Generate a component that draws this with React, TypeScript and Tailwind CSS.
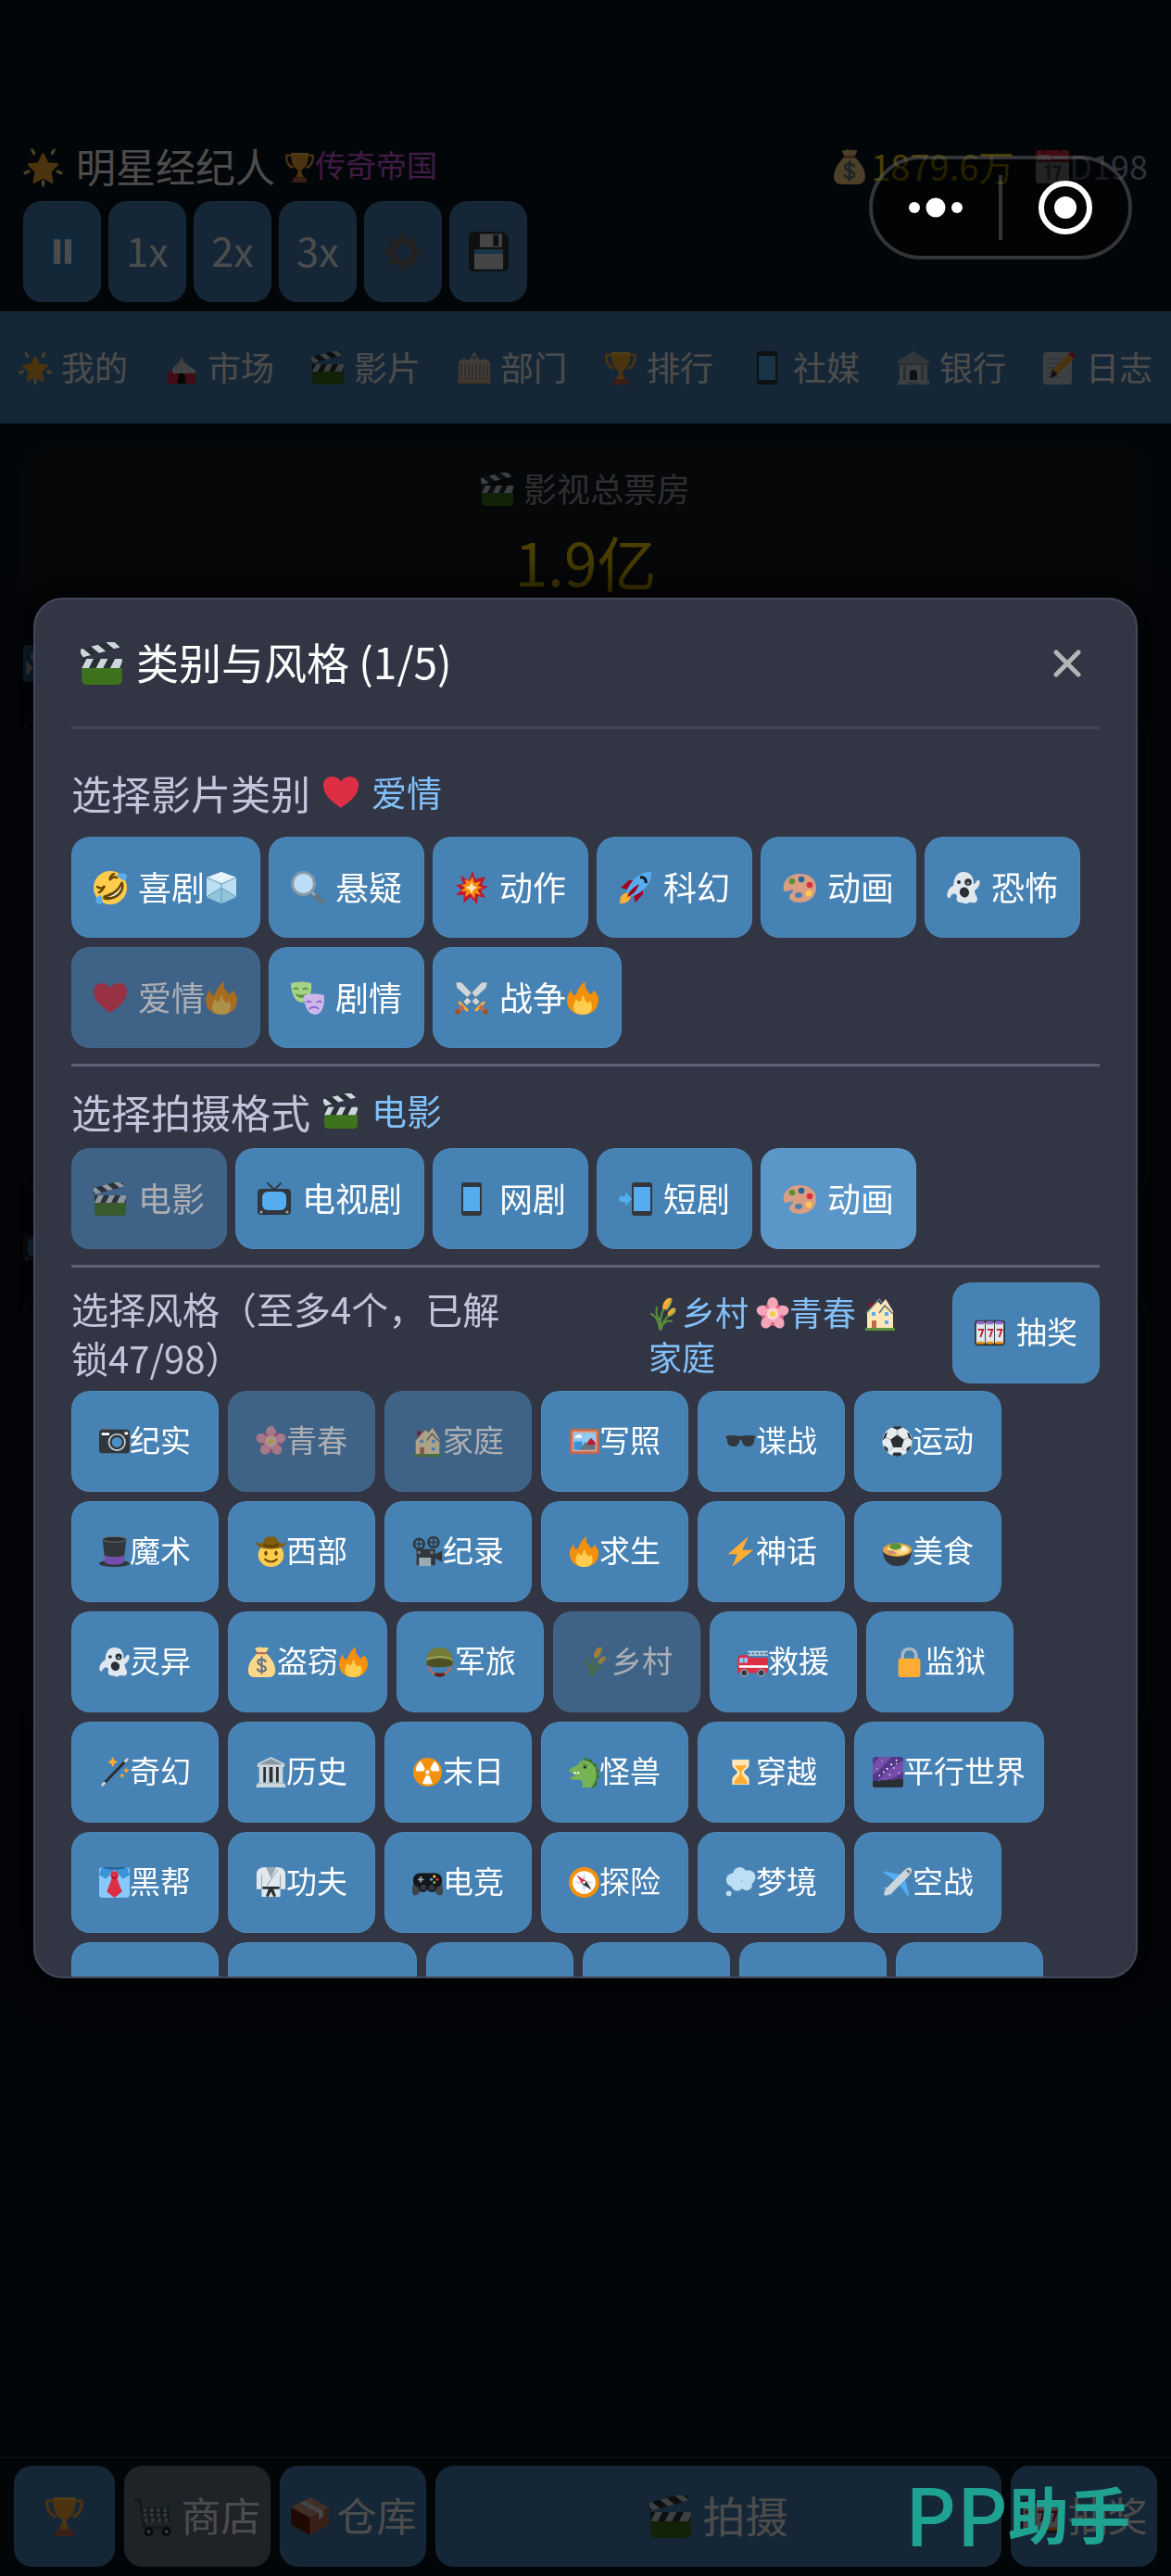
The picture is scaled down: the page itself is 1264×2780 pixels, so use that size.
import React, { useState } from 'react';
import clsx from 'clsx';

// Colour icons, all on a 36x36 grid so they can sit next to text at 1em
const ICONS: Record<string, React.ReactNode> = {
  star: (
    <>
      <path fill="#ffac33" d="M18 6l4 8.500 9 1-6.500 6.500 1.700 9.500L18 27l-8.200 4.500L11.500 22 5 15.500l9-1z" stroke="#ffac33" strokeWidth="2" strokeLinejoin="round" />
      <g fill="#ffd983">
        <ellipse cx="9" cy="4" rx="1.500" ry="3.300" transform="rotate(-28 9 4)" />
        <ellipse cx="27" cy="4" rx="1.500" ry="3.300" transform="rotate(28 27 4)" />
        <ellipse cx="3.300" cy="22.500" rx="3.300" ry="1.500" transform="rotate(-20 3.300 22.500)" />
        <ellipse cx="32.700" cy="22.500" rx="3.300" ry="1.500" transform="rotate(20 32.700 22.500)" />
        <ellipse cx="18" cy="32.500" rx="1.500" ry="3.400" />
      </g>
    </>
  ),
  trophy: (
    <>
      <path fill="none" stroke="#ffac33" strokeWidth="2.600" d="M9 4H2.500c-1 6 2 13 8 14.500M27 4h6.500c1 6-2 13-8 14.500" />
      <path fill="#ffac33" d="M8 1h20c.6 10-1.500 16-7.500 20-1.500 2 .5 6 2.500 9H13c2-3 4-7 2.500-9C9.500 17 7.400 11 8 1z" />
      <path fill="#ffcc4d" d="M8 1h20v2.500H8z" />
      <path fill="#c1694f" d="M11 30h14l2 6H9z" />
    </>
  ),
  money: (
    <>
      <path fill="#fdd888" d="M12 8.500C7 14 2 20 2 28c0 6 4 8 8 8h16c4 0 8-2 8-8 0-8-5-14-10-19.500z" />
      <path fill="#fdd888" d="M10 2c2-2 3 0 4-1s3-1 4 0 3-1 4 0 3-1 4 1l-3 5H13z" />
      <path fill="#bf6952" d="M12 6.500h12v2.500H12z" />
      <path fill="none" stroke="#67757f" strokeWidth="2.400" strokeLinecap="round" d="M22.500 17.500c-1-3-9-3.500-9 .7 0 4.800 9.300 3 9.300 7.800 0 4.400-8.600 4-9.800.7M18 12.500v19" />
    </>
  ),
  calendar: (
    <>
      <path fill="#e1e8ed" d="M0 12h36v20a4 4 0 0 1-4 4H4a4 4 0 0 1-4-4z" />
      <path fill="#dd2e44" d="M0 4a4 4 0 0 1 4-4h28a4 4 0 0 1 4 4v9H0z" />
      <g fill="#8b1a2b"><circle cx="10" cy="1" r="2" /><circle cx="26" cy="1" r="2" /></g>
      <path fill="none" stroke="#fff" strokeWidth="1.400" d="M4 5v5H2M7 5v5h3V5M13 5v5h3M20 8h13" />
      <path fill="none" stroke="#66757f" strokeWidth="3" d="M10 19l4-2v15M18 18h8l-4 14" />
    </>
  ),
  pause: (
    <>
      <rect width="36" height="36" rx="4" fill="#3b88c3" />
      <path fill="#fff" d="M10 7h6v22h-6zM20 7h6v22h-6z" />
    </>
  ),
  gear: (
    <>
      <circle cx="18" cy="18" r="9.500" fill="none" stroke="#746e6c" strokeWidth="5" />
      <path stroke="#746e6c" strokeWidth="5" d="M18 1v7M18 28v7M1 18h7M28 18h7M6 6l5 5M25 25l5 5M6 30l5-5M25 11l5-5" />
    </>
  ),
  floppy: (
    <>
      <path fill="#31373d" d="M4 0h27l5 5v27a4 4 0 0 1-4 4H4a4 4 0 0 1-4-4V4a4 4 0 0 1 4-4z" />
      <path fill="#e1e8ed" d="M10 2h20v12H10zM5 19h26v15H5z" />
      <path fill="#31373d" d="M22 3h5v10h-5z" />
      <path fill="#55acee" d="M5 16h26v4H5z" />
    </>
  ),
  tent: (
    <>
      <path fill="#3b88c3" d="M18 0l7 2-7 2z" />
      <path stroke="#66757f" d="M18 0v8" />
      <path fill="#dd2e44" d="M3 22h30v13H3z" />
      <path fill="#e1e8ed" d="M18 6c2 7 9 10 15 15 0 4-5 4-5 1 0 3-5 3-5 0 0 3-5 3-5 0 0 3-5 3-5 0 0 3-5 3-5-1C9 16 16 13 18 6z" />
      <path fill="none" stroke="#99aab5" d="M17 9l-6 12M19 9l6 12M18 8v14" />
      <path fill="#14171a" d="M15 24h6l2 11H13z" />
    </>
  ),
  clapper: (
    <>
      <path fill="#3e721d" d="M1 20h34v12a4 4 0 0 1-4 4H5a4 4 0 0 1-4-4z" />
      <path fill="#292f33" d="M1 14h34v8H1z" />
      <path fill="#ccd6dd" d="M5 14h6l-4 8H1zM17 14h6l-4 8h-6zM29 14h6v3l-2 5h-8z" />
      <g transform="rotate(-15 1 13)">
        <path fill="#292f33" d="M0 6h34v7H0z" />
        <path fill="#ccd6dd" d="M0 6h4l5 7H2zM11 6h6l5 7h-6zM24 6h6l4 6v1h-5z" />
      </g>
    </>
  ),
  office: (
    <>
      <path fill="#e6cdb0" d="M1 12l5-4 6 2 3-4 3-6 3 6 3 4 6-2 5 4v22H1z" />
      <path fill="#c9d3da" d="M15 7l3-6 3 6v5h-6z" />
      <path stroke="#6f8593" strokeWidth="1.200" d="M4 13v17M8 13v17M12 13v17M16 13v17M20 13v17M24 13v17M28 13v17M32 13v17" />
      <path fill="#d1a47d" d="M0 30h36v1.500H0zM0 33h36v2H0z" />
      <circle cx="18" cy="7" r="1.800" fill="#66757f" />
    </>
  ),
  phone: (
    <>
      <rect x="7" width="22" height="36" rx="3" fill="#31373d" />
      <path fill="#55acee" d="M9 5h18v26H9z" />
    </>
  ),
  phoneIn: (
    <>
      <rect x="14" width="22" height="36" rx="3" fill="#31373d" />
      <path fill="#55acee" d="M16 5h18v26H16zM14 18l-7 8v-5H1l-1-3 1-3h6v-5z" />
    </>
  ),
  bank: (
    <>
      <path fill="#aab8c2" d="M18 0l17 11v3H1V11z" />
      <path fill="#ccd6dd" d="M3 14h30v18H3zM1 32h34v4H1z" />
      <path fill="#8899a6" d="M7 16h3v15H7zM26 16h3v15h-3zM1 13h34v2H1z" />
      <path fill="#31373d" d="M14 31v-7a4 4 0 0 1 8 0v7z" />
      <path fill="#aab8c2" d="M12 33h12v3H12z" />
    </>
  ),
  memo: (
    <>
      <rect y="1" width="31" height="35" rx="4" fill="#ccd6dd" />
      <path stroke="#99aab5" strokeWidth="1.600" d="M4 8h16M4 13h14M4 18h10M4 23h7M4 28h16" />
      <path fill="#ffac33" d="M27 3l6 5-17 17-6-5z" />
      <path fill="#dd2e44" d="M27 3c3-4 10 1 6 5z" />
      <path fill="#292f33" d="M10 20l6 5-8 4z" />
    </>
  ),
  cinema: (
    <>
      <rect width="36" height="36" rx="4" fill="#3b88c3" />
      <circle cx="12" cy="11" r="5" fill="#fff" />
      <circle cx="23" cy="11" r="4" fill="#fff" />
      <path fill="#fff" d="M10 17h17v12H10zM3 15l7 7-7 8z" />
    </>
  ),
  tv: (
    <>
      <path stroke="#31373d" strokeWidth="1.800" strokeLinecap="round" d="M11 1l7 7 7-7" />
      <rect y="7" width="36" height="28" rx="4" fill="#31373d" />
      <rect x="5" y="10" width="26" height="20" rx="6" fill="#55acee" />
      <g fill="#99aab5"><circle cx="4" cy="32" r="1.500" /><circle cx="32" cy="32" r="1.500" /></g>
    </>
  ),
  rofl: (
    <>
      <circle cx="18" cy="18" r="18" fill="#ffcc4d" />
      <path fill="#664500" d="M32 13c3 10-8 20-20 18-3-1-2-4 0-5 9-3 13-5 17-13 1-2 3-2 3 0z" />
      <path fill="#fff" d="M30 16c-3 6-8 10-15 12 8 1 15-6 15-12z" />
      <path fill="none" stroke="#664500" strokeWidth="2.500" strokeLinecap="round" d="M4 17c3 2 6 2 8-1-2 4-3 6-6 7M22 3c-4 2-5 4-4 7 0-3 4-4 7-3" />
      <path fill="#5dadec" d="M25 4c5-3 11-2 11 2 0 5-5 6-11-2zM8 26c-6 2-7 6-4 9 4 2 8 0 4-9z" />
    </>
  ),
  ice: (
    <>
      <path fill="#bddff4" d="M18 1l16 6v21l-16 7L2 28V7z" />
      <path fill="#e1f1fa" d="M18 1l16 6-16 7L2 7z" />
      <path fill="#90c5dc" d="M2 28l16-10 16 10-16 7z" />
      <path fill="none" stroke="#5f9db5" d="M2 28l16-10 16 10M18 14v21M2 7l16 7 16-7" />
      <path fill="none" stroke="#fff" d="M9 6l9-3M14 9l10-4" />
    </>
  ),
  search: (
    <>
      <path stroke="#66757f" strokeWidth="5" strokeLinecap="round" d="M26 26l7 7" />
      <path stroke="#99aab5" strokeWidth="3" d="M21 21l5 5" />
      <circle cx="13.500" cy="13.500" r="12" fill="#bbddf5" stroke="#8899a6" strokeWidth="3" />
    </>
  ),
  boom: (
    <>
      <path fill="#be1931" d="M19 0l3 9 11-3-4 9 7 2-8 4 5 8-8-2-1 9-7-8-8 7 1-9-9 0 6-6-6-5 8-1-3-9 9 5z" />
      <path fill="#f4900c" d="M19 6l2 7 7-2-3 5 5 2-6 2 4 6-6-2-1 6-4-6-6 4 1-6-6 0 5-4-4-3 5-1-1-5 5 2z" />
      <path fill="#ffe8b6" d="M18 12l2 4 4 2-4 2-2 5-2-5-5-2 5-2z" />
    </>
  ),
  rocket: (
    <>
      <path fill="#a0041e" d="M2 18l9-8h6l-8 10zM18 34l8-9v-6l-10 8z" />
      <path fill="#ffac33" d="M1 35c0-6 1-9 5-11s8 2 6 6-5 5-11 5z" />
      <path fill="#55acee" d="M35 1C24 0 14 8 8 22l6 6C28 22 36 12 35 1z" />
      <path fill="#a0041e" d="M22 14c-7 4-11 8-13 14 6-2 10-6 13-14z" />
      <path fill="none" stroke="#14171a" strokeWidth="3" d="M23 7c4-1 7 2 6 6" />
    </>
  ),
  palette: (
    <>
      <path fill="#d99e82" d="M18 3c11 0 18 6 18 15s-7 16-18 16c-6 0-11-3-11-6 0-4 4-4 4-7s-7 3-10 0C-1 13 5 3 18 3z" />
      <ellipse cx="17" cy="26" rx="4" ry="3" fill="#4682b4" />
      <circle cx="10" cy="11" r="3.300" fill="#5c913b" />
      <circle cx="20" cy="9" r="3.300" fill="#226699" />
      <circle cx="29" cy="15" r="3.300" fill="#dd2e44" />
      <circle cx="28" cy="24" r="3.300" fill="#ffcc4d" />
    </>
  ),
  ghost: (
    <>
      <path fill="#e1e8ed" d="M18 1c8 0 11 6 11 13 2 1 3-6 6-4 2 3-1 9-5 11 0 5 5 8 2 12-2 3-6 0-8 1-4 3-6 0-9 0-4 0-5-2-4-7-1-3-3-3-5-2s-2 5-4 4c-4-2 0-12 5-13C8 8 10 1 18 1z" />
      <circle cx="13" cy="12" r="2" fill="#292f33" />
      <circle cx="23" cy="12" r="3.800" fill="#292f33" />
      <circle cx="23" cy="13" r="1.600" fill="#8899a6" />
      <ellipse cx="19" cy="23" rx="5" ry="5.500" fill="#292f33" transform="rotate(-30 19 23)" />
    </>
  ),
  heart: <path fill="#dd2e44" d="M18 34C11 29 0 22 0 11 0 5 4 2 9 2c4 0 7 2 9 5 2-3 5-5 9-5 5 0 9 3 9 9 0 11-11 18-18 23z" />,
  fire: (
    <>
      <path fill="#f4900c" d="M35 19c0 11-7 17-17 17S1 30 1 20C1 16 3 12 6 9c0 4 1 6 3 6 4 0 1-7 12-15-1 6 0 8 3 11 1 2 2 4 4 2 1-1 1-2 3-3 1 3 4 5 4 9z" />
      <path fill="#ffcc4d" d="M28 28c0 5-4 8-10 8S8 33 8 28c0-4 2-6 3-9 2 3 3 4 5 2 1-1 0-4 3-6 0 5 2 6 4 8 1 1 3-1 3-2 1 2 2 4 2 7z" />
    </>
  ),
  masks: (
    <>
      <path fill="#a6d388" d="M0 2c7-2 14-2 22 0 1 12-3 21-10 21S0 14 0 2z" />
      <path fill="none" stroke="#5c913b" strokeWidth="1.800" d="M3 9c1-2 4-2 5 0M13 9c1-2 4-2 5 0" />
      <path fill="#5c913b" d="M5 13c4 2 8 2 12 0-1 6-10 7-12 0z" />
      <path fill="#cbb7ea" d="M14 15c7-2 14-2 22 0 1 12-3 21-10 21s-12-9-12-21z" />
      <path fill="none" stroke="#9266cc" strokeWidth="1.800" d="M17 23c1-2 4-2 5 0M28 23c1-2 4-2 5 0M20 30c2-3 8-3 10 0" />
    </>
  ),
  swords: (
    <>
      <path fill="#ccd6dd" stroke="#66757f" strokeWidth=".600" d="M1 1h6l20 21-4 4L2 7zM35 1h-6L9 22l4 4L34 7z" />
      <path stroke="#ffac33" strokeWidth="3" strokeLinecap="round" d="M5 23l8 8M31 23l-8 8" />
      <path stroke="#c1694f" strokeWidth="4" d="M9 27l-6 6M27 27l6 6" />
      <g fill="#a0522d"><circle cx="3" cy="33" r="2.800" /><circle cx="33" cy="33" r="2.800" /></g>
    </>
  ),
  camera: (
    <>
      <path fill="#66757f" d="M4 2h9v4H4z" />
      <rect y="4" width="36" height="28" rx="4" fill="#31373d" />
      <path fill="#fff" d="M3 8h9v3H3zM30 7h4v3h-4z" />
      <circle cx="21" cy="19" r="9.500" fill="#31373d" stroke="#ccd6dd" strokeWidth="1.800" />
      <circle cx="21" cy="19" r="6" fill="#4a8fc7" />
    </>
  ),
  blossom: (
    <>
      <g fill="#f4a6b8">
        <ellipse cx="18" cy="8" rx="6" ry="8" />
        <ellipse cx="18" cy="8" rx="6" ry="8" transform="rotate(72 18 18)" />
        <ellipse cx="18" cy="8" rx="6" ry="8" transform="rotate(144 18 18)" />
        <ellipse cx="18" cy="8" rx="6" ry="8" transform="rotate(216 18 18)" />
        <ellipse cx="18" cy="8" rx="6" ry="8" transform="rotate(288 18 18)" />
      </g>
      <g fill="#dd5c82"><circle cx="24" cy="10" r="2" /><circle cx="12" cy="10" r="2" /><circle cx="8" cy="21" r="2" /><circle cx="28" cy="21" r="2" /><circle cx="18" cy="29" r="2" /></g>
      <circle cx="18" cy="18" r="6" fill="#fff" opacity=".6" />
      <circle cx="18" cy="18" r="3.600" fill="#ffcc4d" />
    </>
  ),
  house: (
    <>
      <path fill="#a0041e" d="M6 6h4v10H6z" />
      <path fill="#ffe8b6" d="M4 17L15 4l4 4 5-6 8 13v18H4z" />
      <path fill="none" stroke="#66757f" strokeWidth="1.600" d="M3 17L17 2l3 4M17 17l6-8 9 9" />
      <path fill="#55acee" d="M9 16h4v4H9zM23 16h4v4h-4zM23 25h4v4h-4z" />
      <path fill="#c1694f" d="M9 25h5v8H9z" />
      <path fill="#5c913b" d="M2 33h32v3H2z" />
    </>
  ),
  picture: (
    <>
      <rect x="1" y="3" width="35" height="30" rx="2" fill="#c1694f" />
      <path fill="#e0a08a" d="M4 6h29v24H4z" />
      <path fill="#8fcaf5" d="M6 8h25v20H6z" />
      <path fill="#3b94d9" d="M6 18h10v10H6z" />
      <path fill="#66757f" d="M13 28l6-9 12 2v7z" />
      <path fill="#be1931" d="M22 19l4-5 5 5v3h-9z" />
      <path fill="#fff" d="M7 14c0-3 3-3 3-3 2-3 6 0 5 3z" />
    </>
  ),
  glasses: <path fill="#31373d" d="M0 12c6-2 12-1 18 0 6-1 12-2 18 0l-2 3c0 6-2 9-7 9-6 0-7-4-8-8h-2c-1 4-2 8-8 8-5 0-7-3-7-9z" />,
  soccer: (
    <>
      <circle cx="18" cy="18" r="17.500" fill="#e6ebee" />
      <path fill="#292f33" d="M18 10l8 6-3 9H13l-3-9zM12 1.500l6 3 6-3-3-1.300h-6zM.5 17l4-3 2-7-3 2zM35.500 17l-4-3-2-7 3 2zM7 31v-5l-5-3 1 4zM29 31v-5l5-3-1 4zM14 31h8l2 3-6 2-6-2z" />
      <path stroke="#99aab5" d="M18 10V4M26 16l6-3M23 25l4 4M13 25l-4 4M10 16l-6-3" />
    </>
  ),
  tophat: (
    <>
      <ellipse cx="18" cy="32" rx="18" ry="4" fill="#31373d" />
      <path fill="#31373d" d="M4 3h28l-3 27H7z" />
      <path fill="#744eaa" d="M6 22c7 3 17 3 24 0l-1 9c-6 3-16 3-22 0z" />
      <ellipse cx="18" cy="3.500" rx="14" ry="3.200" fill="#292f33" stroke="#66757f" />
    </>
  ),
  cowboy: (
    <>
      <ellipse cx="18" cy="22" rx="15" ry="14" fill="#ffcc4d" />
      <path fill="#825d0e" d="M0 6c3 3 6 3 9 1 2-5 4-8 9-6 5-2 7 1 9 6 3 2 6 2 9-1 0 6-8 9-18 9S0 12 0 6z" />
      <path fill="#664500" d="M9 8c6 3 12 3 18 0v3c-6 3-12 3-18 0z" />
      <g fill="#664500"><ellipse cx="12" cy="20" rx="1.800" ry="3" /><ellipse cx="24" cy="20" rx="1.800" ry="3" /></g>
      <path fill="none" stroke="#664500" strokeWidth="2" strokeLinecap="round" d="M11 27c4 4 10 4 14 0" />
    </>
  ),
  projector: (
    <>
      <g fill="none" stroke="#31373d" strokeWidth="2.600"><circle cx="8" cy="9" r="6" /><circle cx="25" cy="7" r="6" /></g>
      <path stroke="#31373d" strokeWidth="1.600" d="M8 3v12M2 9h12M25 1v12M19 7h12" />
      <path fill="#31373d" d="M5 15h22v6l8-4v13l-8-4v8H5z" />
      <path fill="#99aab5" d="M8 25h14v10H8z" />
      <g fill="#66757f"><circle cx="8" cy="19" r="2" /><circle cx="23" cy="19" r="2" /></g>
    </>
  ),
  bolt: <path fill="#ffac33" d="M27 0L3 21h11L8 36l25-20H20z" />,
  stew: (
    <>
      <path fill="#31373d" d="M1 16h34c0 10-5 19-17 19S1 26 1 16z" />
      <ellipse cx="18" cy="16" rx="17" ry="8" fill="#e8a33d" />
      <ellipse cx="19" cy="16" rx="13" ry="6" fill="#ffd983" />
      <ellipse cx="16" cy="12" rx="7" ry="4" fill="#5c913b" />
      <path fill="#c98a78" d="M5 16l8 1 6 4-10 0z" />
      <circle cx="26" cy="15" r="3" fill="#f4f0d8" />
    </>
  ),
  helmet: (
    <>
      <path fill="none" stroke="#c1694f" strokeWidth="2" d="M5 20c0 8 5 13 13 14 8-1 13-6 13-14" />
      <path fill="#662113" d="M12 31h12v3l-6 2-6-2z" />
      <path fill="#737b37" d="M3 16C3 6 9 1 18 1s15 5 15 15l2 4c-8 5-26 5-34 0z" />
      <path fill="#4a5024" d="M3 17c9-4 21-4 30 0v5c-9 3-21 3-30 0z" />
      <path fill="#9a9f56" d="M3 14c9-4 21-4 30 0v2c-9-4-21-4-30 0z" />
    </>
  ),
  fireTruck: (
    <>
      <path stroke="#ccd6dd" strokeWidth="1.500" d="M12 6h24M12 10h24M16 6v4M21 6v4M26 6v4M31 6v4" />
      <path fill="#dd2e44" d="M2 10h10l2 3h22v18H0V17z" />
      <path fill="#8fcaf5" d="M3 13h4v6H2zM8 13h4v6H8z" />
      <path fill="#fff" d="M2 22h34v3H2z" />
      <g fill="#31373d" stroke="#99aab5" strokeWidth="1.500"><circle cx="8" cy="31" r="3.800" /><circle cx="28" cy="31" r="3.800" /></g>
    </>
  ),
  lock: (
    <>
      <path fill="none" stroke="#aab8c2" strokeWidth="4" d="M10 17V11c0-11 16-11 16 0v6" />
      <rect x="5" y="14" width="26" height="22" rx="3" fill="#ffac33" />
    </>
  ),
  wand: (
    <>
      <path stroke="#292f33" strokeWidth="3.400" strokeLinecap="round" d="M4 33L33 3" />
      <path stroke="#ccd6dd" strokeWidth="3.400" strokeLinecap="round" d="M4 33l2-2M31 5l2-2" />
      <path fill="#ffac33" d="M16 0l2 4 4 2-4 2-2 4-2-4-4-2 4-2zM32 12l1 3 3 1-3 1-1 3-1-3-3-1 3-1zM27 19l1 2 2 1-2 1-1 2-1-2-2-1 2-1z" />
    </>
  ),
  temple: (
    <>
      <path fill="#ccd6dd" d="M18 0l16 8v4H2V8zM2 31h32l2 5H0z" />
      <path fill="#8899a6" d="M4 9l14-7 14 7z" />
      <path fill="#ccd6dd" d="M4 12h28v19H4z" />
      <path fill="#292f33" d="M9 12h3v18H9zM16 12h4v18h-4zM24 12h3v18h-3z" />
    </>
  ),
  radiation: (
    <>
      <circle cx="18" cy="18" r="17" fill="#f4900c" />
      <g fill="#fff">
        <circle cx="18" cy="18" r="2.500" />
        <path d="M15 14L10 5C6 8 4 12 4 17h9zM21 14l5-9c4 3 6 7 6 12h-9zM16 22l-4 9c4 2 8 2 12 0l-4-9z" />
      </g>
    </>
  ),
  dragon: (
    <>
      <path fill="#3e721d" d="M18 0l4 3 5 0 1 4 5 2-1 4 4 3-2 4 2 4-3 2v6l-3 4H18z" />
      <path fill="#77b255" d="M0 17c1-5 7-5 11-8 2-5 6-6 11-4 9 3 12 11 10 21-1 5-3 8-6 10H15c3-4 1-9-3-9s-9 1-11-3c3 0 5-1 6-3z" />
      <path fill="#fff" d="M5 20l2-3 2 3 2-3 2 3z" />
      <circle cx="19" cy="12" r="2" fill="#292f33" />
      <path fill="#5c913b" d="M15 8l9 1-6 2z" />
    </>
  ),
  hourglass: (
    <>
      <path fill="#ffe8b6" d="M8 3h20v6c0 5-6 6-6 9s6 4 6 9v6H8v-6c0-5 6-6 6-9s-6-4-6-9z" />
      <path fill="#ffac33" d="M11 10h14c-2 4-5 5-6 8 0 6 7 8 7 14H10c0-6 7-8 7-14-1-3-4-4-6-8z" />
      <path fill="#3b88c3" d="M6 0h24v3H6zM6 33h24v3H6z" />
    </>
  ),
  galaxy: (
    <>
      <rect width="36" height="36" rx="3" fill="#553788" />
      <path fill="#744eaa" d="M8 0h14L6 18l-6 3V9zM36 4v14L18 28H6l14-14z" />
      <path fill="#292f33" d="M0 29c4-3 6 1 9-1s6 1 9-1 6 2 9 0 6-2 9 1v5a3 3 0 0 1-3 3H3a3 3 0 0 1-3-3z" />
      <g fill="#fff">
        <circle cx="28" cy="4" r="1" /><circle cx="22" cy="9" r="1.200" /><circle cx="17" cy="14" r="1.200" /><circle cx="13" cy="18" r="1" /><circle cx="25" cy="13" r=".8" />
        <circle cx="8" cy="22" r=".9" /><circle cx="5" cy="14" r=".7" /><circle cx="31" cy="19" r=".8" /><circle cx="20" cy="21" r=".9" /><circle cx="11" cy="5" r=".7" /><circle cx="28" cy="8" r=".8" />
      </g>
    </>
  ),
  necktie: (
    <>
      <rect width="36" height="36" rx="4" fill="#88c9f9" />
      <path fill="#3b94d9" d="M3 0h30l3 9-8 5-10-11L8 14 0 9z" />
      <path fill="#226699" d="M4 0h28c-6 4-22 4-28 0z" />
      <path fill="#dd2e44" d="M15 5h6l2 5-2 3 6 16-9 7-9-7 6-16-2-3z" />
      <path fill="none" stroke="#a0041e" strokeWidth="1.500" d="M15 11c1 3 5 3 6 0" />
    </>
  ),
  gi: (
    <>
      <path fill="#e1e8ed" d="M12 0h12c7 0 11 3 11 8v18h-6v9H7v-9H1V8c0-5 4-8 11-8z" />
      <path fill="#99aab5" d="M12 0h12l-6 13z" />
      <path stroke="#99aab5" strokeWidth="1.200" d="M26 3L13 22M7 9v17M29 9v17" />
      <path fill="#292f33" d="M8 23h20v3h-7l3 8-3 1-3-6-3 6-3-1 3-8H8z" />
    </>
  ),
  gamepad: (
    <>
      <path fill="#3d454b" d="M2 16l10 10-5 6c-5 3-8 0-7-7zM34 16L24 26l5 6c5 3 8 0 7-7z" />
      <rect x="1" y="7" width="34" height="17" rx="8" fill="#14171a" />
      <g fill="#31373d" stroke="#14171a" strokeWidth="2"><circle cx="13" cy="24" r="4.500" /><circle cx="23" cy="24" r="4.500" /></g>
      <path stroke="#99aab5" strokeWidth="2" d="M10 11v7M6.500 14.500h7" />
      <circle cx="26" cy="11" r="1.700" fill="#ffcc4d" />
      <circle cx="29.500" cy="14.500" r="1.700" fill="#dd2e44" />
      <circle cx="22.500" cy="14.500" r="1.700" fill="#55acee" />
      <circle cx="26" cy="18" r="1.700" fill="#77b255" />
    </>
  ),
  compass: (
    <>
      <circle cx="18" cy="18" r="18" fill="#f4900c" />
      <circle cx="18" cy="18" r="13.500" fill="#fff" />
      <path fill="#ccd6dd" d="M18 6l2 10 10 2-10 2-2 10-2-10-10-2 10-2z" />
      <path fill="#dd2e44" d="M9 9l11 7-4 4z" />
      <path fill="#292f33" d="M27 27l-11-7 4-4z" />
      <circle cx="18" cy="18" r="1.600" fill="#fff" />
    </>
  ),
  thought: (
    <g fill="#bddff4">
      <circle cx="9" cy="15" r="8" /><circle cx="17" cy="8" r="8" /><circle cx="27" cy="12" r="8.500" /><circle cx="14" cy="21" r="7" /><circle cx="25" cy="21" r="6.500" />
      <circle cx="4" cy="31" r="3.200" />
    </g>
  ),
  plane: (
    <>
      <path fill="#55acee" d="M1 6l3-1 19 4-6 8zM31 35l1-3-5-19-8 6zM0 24h6l5 4-1-1zM12 36v-6l-4-5zM0 24l9-1 4 4-1 9-4-7z" />
      <path fill="#ccd6dd" d="M34 1c3 3-1 8-4 11L11 31c-3 2-7 3-8 2s0-5 2-8L24 6c3-3 7-7 10-5z" />
      <path fill="#66757f" d="M28 4l4 4 1-3-2-2z" />
    </>
  ),
  rice: (
    <>
      <path fill="none" stroke="#5c913b" strokeWidth="2" strokeLinecap="round" d="M13 35C12 24 14 14 20 7M14 34c1-8 5-13 12-17M12 34C11 26 8 20 3 18M13 26c-5-6-5-10-4-15M16 29c3-4 6-4 9-3" />
      <ellipse cx="20" cy="7" rx="3.600" ry="7" fill="#ffac33" transform="rotate(32 20 7)" />
      <ellipse cx="25" cy="16" rx="3" ry="5.500" fill="#ffac33" transform="rotate(45 25 16)" />
      <path stroke="#77b255" strokeWidth="1.600" d="M25 1c-1 6-3 10-6 13M29 12c-2 4-4 7-8 8" />
    </>
  ),
  slot: (
    <>
      <rect y="3" width="36" height="30" rx="4" fill="#31373d" />
      <path fill="#e1e8ed" d="M2 6h10v24H2zM13 6h10v24H13zM24 6h10v24H24z" />
      <path fill="#9266cc" d="M3 4h8v4H3zM14 4h8v4h-8zM25 4h8v4h-8z" />
      <path fill="#f4900c" d="M3 28h8v3H3zM14 28h8v3h-8zM25 28h8v3h-8z" />
      <path fill="none" stroke="#be1931" strokeWidth="2" d="M4 14h6l-3 9M15 14h6l-3 9M26 14h6l-3 9" />
    </>
  ),
  cart: (
    <>
      <path fill="#3f5560" d="M6 10h28l-2 13H8z" />
      <path fill="none" stroke="#3f4f58" strokeWidth="2.200" d="M0 3h5l4 25h24" />
      <path stroke="#9fb4c0" strokeWidth="3.400" strokeDasharray="3.400 2.600" d="M8 12.500h25M8 17h25M9 21.500h23" />
      <g fill="#14171a" stroke="#14171a" strokeWidth="3"><circle cx="13" cy="32" r="2.500" /><circle cx="29" cy="32" r="2.500" /></g>
      <g fill="#b8c4cc"><circle cx="13" cy="32" r="1.800" /><circle cx="29" cy="32" r="1.800" /></g>
    </>
  ),
  parcel: (
    <>
      <path fill="#c1694f" d="M18 1l17 9v16l-17 9L1 26V10z" />
      <path fill="#d99e82" d="M18 1l17 9-17 9L1 10z" />
      <path fill="#662113" d="M1 10l17 9v16L1 26z" />
      <path fill="#e1e8ed" d="M9 6l4-2 17 9v6l-4 2v-6z" />
    </>
  ),
};

type IconProps = { name: string; className?: string };

const Icon = ({ name, className }: IconProps) => (
  <svg viewBox="0 0 36 36" fill="none" aria-hidden="true" className={clsx('size-[1em] shrink-0', className)}>
    {ICONS[name]}
  </svg>
);

// CJK glyphs sit low in their line box, the padding lifts them level with the icon
const Text = ({ children }: { children: React.ReactNode }) => <span className="pb-1">{children}</span>;

type Item = { icon: string; label: string; tail?: string };

const TABS: Item[] = [
  { icon: 'star', label: '我的' },
  { icon: 'tent', label: '市场' },
  { icon: 'clapper', label: '影片' },
  { icon: 'office', label: '部门' },
  { icon: 'trophy', label: '排行' },
  { icon: 'phone', label: '社媒' },
  { icon: 'bank', label: '银行' },
  { icon: 'memo', label: '日志' },
];

const GENRES: Item[] = [
  { icon: 'rofl', label: '喜剧', tail: 'ice' },
  { icon: 'search', label: '悬疑' },
  { icon: 'boom', label: '动作' },
  { icon: 'rocket', label: '科幻' },
  { icon: 'palette', label: '动画' },
  { icon: 'ghost', label: '恐怖' },
  { icon: 'heart', label: '爱情', tail: 'fire' },
  { icon: 'masks', label: '剧情' },
  { icon: 'swords', label: '战争', tail: 'fire' },
];

const FORMATS: Item[] = [
  { icon: 'clapper', label: '电影' },
  { icon: 'tv', label: '电视剧' },
  { icon: 'phone', label: '网剧' },
  { icon: 'phoneIn', label: '短剧' },
  { icon: 'palette', label: '动画' },
];

const STYLES: Item[] = [
  { icon: 'camera', label: '纪实' },
  { icon: 'blossom', label: '青春' },
  { icon: 'house', label: '家庭' },
  { icon: 'picture', label: '写照' },
  { icon: 'glasses', label: '谍战' },
  { icon: 'soccer', label: '运动' },
  { icon: 'tophat', label: '魔术' },
  { icon: 'cowboy', label: '西部' },
  { icon: 'projector', label: '纪录' },
  { icon: 'fire', label: '求生' },
  { icon: 'bolt', label: '神话' },
  { icon: 'stew', label: '美食' },
  { icon: 'ghost', label: '灵异' },
  { icon: 'money', label: '盗窃', tail: 'fire' },
  { icon: 'helmet', label: '军旅' },
  { icon: 'rice', label: '乡村' },
  { icon: 'fireTruck', label: '救援' },
  { icon: 'lock', label: '监狱' },
  { icon: 'wand', label: '奇幻' },
  { icon: 'temple', label: '历史' },
  { icon: 'radiation', label: '末日' },
  { icon: 'dragon', label: '怪兽' },
  { icon: 'hourglass', label: '穿越' },
  { icon: 'galaxy', label: '平行世界' },
  { icon: 'necktie', label: '黑帮' },
  { icon: 'gi', label: '功夫' },
  { icon: 'gamepad', label: '电竞' },
  { icon: 'compass', label: '探险' },
  { icon: 'thought', label: '梦境' },
  { icon: 'plane', label: '空战' },
];

const BTN_BASE = 'flex h-[109px] items-center justify-center rounded-[20px] border border-white/5 whitespace-nowrap text-white';
const BTN = `${BTN_BASE} bg-[#4682b4]`;

type ChoiceProps = { item: Item; picked: boolean; onPick: () => void; light?: boolean };

// Large option: icon, gap, label
const Choice = ({ item, picked, onPick, light }: ChoiceProps) => (
  <button onClick={onPick} aria-pressed={picked} className={clsx(BTN_BASE, 'px-[23px] text-[36px]', light ? 'bg-[#5a96c8]' : 'bg-[#4682b4]', picked && 'opacity-60')}>
    <Icon name={item.icon} className="mr-3" />
    <Text>{item.label}</Text>
    {item.tail && <Icon name={item.tail} />}
  </button>
);

// Compact option: icon tight against the label
const StyleChoice = ({ item, picked, onPick }: ChoiceProps) => (
  <button onClick={onPick} aria-pressed={picked} className={clsx(BTN, 'min-w-[159px] px-[19px] text-[33px]', picked && 'opacity-60')}>
    <Icon name={item.icon} />
    <Text>{item.label}</Text>
    {item.tail && <Icon name={item.tail} />}
  </button>
);

const Header = () => (
  <header className="px-[25px] pt-[152px] pb-[10px]">
    <div className="flex h-14 items-center justify-between">
      <div className="flex items-center gap-[10px]">
        <h1 className="flex items-center gap-[14px] text-[43px] text-white">
          <Icon name="star" />
          <Text>明星经纪人</Text>
        </h1>
        <span className="flex items-center text-[33px] text-[#d65ae0]">
          <Icon name="trophy" />
          <Text>传奇帝国</Text>
        </span>
      </div>
      <div className="flex items-center gap-6">
        <span className="flex items-center gap-1 text-[38px] text-[#ffd700]">
          <Icon name="money" />
          <Text>1879.6万</Text>
        </span>
        <span className="flex items-center text-[36px] text-[#a0a0c8]">
          <Icon name="calendar" />
          <Text>D198</Text>
        </span>
      </div>
    </div>
    <div className="mt-[9px] flex gap-2 text-[43px]">
      <button aria-label="暂停" className={clsx(BTN, 'w-[84px]')}><Icon name="pause" /></button>
      <button className={clsx(BTN, 'w-[84px]')}><Text>1x</Text></button>
      <button className={clsx(BTN, 'w-[84px]')}><Text>2x</Text></button>
      <button className={clsx(BTN, 'w-[84px]')}><Text>3x</Text></button>
      <button aria-label="设置" className={clsx(BTN, 'w-[84px]')}><Icon name="gear" /></button>
      <button aria-label="保存" className={clsx(BTN, 'w-[84px]')}><Icon name="floppy" /></button>
    </div>
  </header>
);

const BottomBar = () => (
  <footer className="mt-auto flex gap-[10px] border-t-2 border-white/10 px-[15px] pt-2 pb-[10px] text-[43px]">
    <button aria-label="成就" className={clsx(BTN, 'w-[109px]')}><Icon name="trophy" /></button>
    <button className={clsx(BTN_BASE, 'w-[158px] gap-2 bg-gray-500')}><Icon name="cart" /><Text>商店</Text></button>
    <button className={clsx(BTN, 'w-[158px] gap-2')}><Icon name="parcel" /><Text>仓库</Text></button>
    <button className={clsx(BTN, 'flex-1 gap-3 text-[46px]')}><Icon name="clapper" /><Text>拍摄</Text></button>
    <button className={clsx(BTN, 'w-[158px] gap-2')}><Icon name="slot" /><Text>抽奖</Text></button>
  </footer>
);

const App: React.FC = () => {
  const [open, setOpen] = useState(true);
  const [genre, setGenre] = useState('爱情');
  const [format, setFormat] = useState('电影');
  const [styles, setStyles] = useState(['乡村', '青春', '家庭']);

  const pickedGenre = GENRES.find((g) => g.label === genre)!;
  const pickedFormat = FORMATS.find((f) => f.label === format)!;

  const toggleStyle = (label: string) => {
    if (styles.includes(label)) {
      setStyles(styles.filter((s) => s !== label));
    } else if (styles.length < 4) {
      setStyles([...styles, label]);
    }
  };

  return (
    <div className="flex min-h-screen flex-col bg-[#0d1421] font-['Noto_Sans_CJK_SC',sans-serif]">
      <Header />

      <nav className="grid h-[121px] grid-cols-8 bg-[#4682b4] text-[36px] text-white">
        {TABS.map((tab) => (
          <a key={tab.label} href="#" className="flex items-center justify-center gap-[10px] whitespace-nowrap">
            <Icon name={tab.icon} />
            <Text>{tab.label}</Text>
          </a>
        ))}
      </nav>

      <main className="px-[25px] pt-[26px]">
        <section className="flex h-[184px] flex-col items-center rounded-[28px] bg-[#17191f] pt-5">
          <div className="flex h-[50px] items-center gap-[10px] text-[36px] text-[#9a9aa4]">
            <Icon name="clapper" />
            <Text>影视总票房</Text>
          </div>
          <div className="text-[64px] leading-[104px] text-[#ffd700]">1.9亿</div>
        </section>
        <div className="flex h-[98px] items-center text-[40px]"><Icon name="cinema" /></div>
        <section className="h-[530px] rounded-[28px] border-2 border-white/10" />
        <div className="flex h-[98px] items-center text-[36px]"><Icon name="tv" /></div>
        <section className="h-[476px] rounded-[28px] border-2 border-white/10" />
      </main>

      <BottomBar />

      {/* Dialog */}
      {open && (
        <div className="fixed inset-0 flex items-center justify-center bg-black/70 px-9">
          <div role="dialog" aria-modal="true" aria-labelledby="dlg-title" className="max-h-[1490px] w-full overflow-hidden rounded-[32px] border-2 border-[#44465a] bg-[#323644] px-[39px] shadow-[0_0_40px_20px_rgba(0,0,0,0.6)]">
            <div className="flex h-[140px] items-center justify-between border-b-3 border-[#424459] px-[10px]">
              <h2 id="dlg-title" className="flex items-center gap-[14px] text-[46px] text-white">
                <Icon name="clapper" />
                <Text>类别与风格 (1/5)</Text>
              </h2>
              <button aria-label="关闭" onClick={() => setOpen(false)} className="flex size-[50px] items-center justify-center">
                <svg viewBox="0 0 30 30" className="size-[30px]" stroke="#b4b4b4" strokeWidth="5" strokeLinecap="round">
                  <path d="M3 3l24 24M27 3L3 27" />
                </svg>
              </button>
            </div>

            <div className="mt-9 mb-4 flex h-16 items-center text-[43px] text-[#c6c4dc]">
              <h3><Text>选择影片类别</Text></h3>
              <span className="ml-[14px] flex items-center gap-[14px] text-[38px] text-[#82c0fa]">
                <Icon name={pickedGenre.icon} />
                <Text>{genre}</Text>
              </span>
            </div>
            <div className="flex flex-wrap gap-x-[9px] gap-y-[10px]">
              {GENRES.map((g) => (
                <Choice key={g.label} item={g} picked={g.label === genre} onPick={() => setGenre(g.label)} />
              ))}
            </div>

            <hr className="mt-[17px] border-t-3 border-[#5f6078]" />
            <div className="mt-4 mb-2 flex h-16 items-center text-[43px] text-[#c6c4dc]">
              <h3><Text>选择拍摄格式</Text></h3>
              <span className="ml-[14px] flex items-center gap-[14px] text-[38px] text-[#82c0fa]">
                <Icon name={pickedFormat.icon} />
                <Text>{format}</Text>
              </span>
            </div>
            <div className="flex flex-wrap gap-x-[9px] gap-y-[10px]">
              {FORMATS.map((f) => (
                <Choice key={f.label} item={f} picked={f.label === format} onPick={() => setFormat(f.label)} light={f.label === '动画'} />
              ))}
            </div>

            <hr className="mt-[17px] border-t-3 border-[#5f6078]" />
            <div className="mt-4 mb-2 flex items-center">
              <h3 className="w-[480px] text-[40px] leading-[53px] text-[#c6c4dc]">选择风格（至多4个，已解锁47/98）</h3>
              <p className="mr-12 ml-auto w-[280px] text-[36px] leading-[48px] text-[#82c0fa]">
                {styles.map((label) => (
                  <React.Fragment key={label}>
                    <Icon name={STYLES.find((s) => s.label === label)!.icon} className="inline-block align-[-5px]" />
                    {label}{' '}
                  </React.Fragment>
                ))}
              </p>
              <button className={clsx(BTN, 'gap-3 px-[23px] text-[33px]')}>
                <Icon name="slot" />
                <Text>抽奖</Text>
              </button>
            </div>
            <div className="flex flex-wrap gap-[10px]">
              {STYLES.map((s) => (
                <StyleChoice key={s.label} item={s} picked={styles.includes(s.label)} onPick={() => toggleStyle(s.label)} />
              ))}
              {/* next row, cut off by the dialog edge */}
              <div className={clsx(BTN, 'w-[159px]')} />
              <div className={clsx(BTN, 'w-[204px]')} />
              <div className={clsx(BTN, 'w-[159px]')} />
              <div className={clsx(BTN, 'w-[159px]')} />
              <div className={clsx(BTN, 'w-[159px]')} />
              <div className={clsx(BTN, 'w-[159px]')} />
            </div>
          </div>
        </div>
      )}

      {/* Host app capsule */}
      <div className="fixed top-[168px] right-[42px] flex h-[112px] w-[284px] items-center rounded-full border-4 border-white/20 bg-black/50">
        <button aria-label="更多" className="flex flex-1 justify-center">
          <svg viewBox="0 0 60 24" className="h-6 w-[60px]" fill="#fff">
            <circle cx="7" cy="12" r="6" />
            <circle cx="30" cy="12" r="10.500" />
            <circle cx="53" cy="12" r="6" />
          </svg>
        </button>
        <span className="h-[70px] w-1 bg-white/20" />
        <button aria-label="退出" className="flex flex-1 justify-center">
          <svg viewBox="0 0 60 60" className="size-[60px]" fill="none">
            <circle cx="30" cy="30" r="26" stroke="#fff" strokeWidth="6" />
            <circle cx="30" cy="30" r="12" fill="#fff" />
          </svg>
        </button>
      </div>

      {/* Watermark */}
      <div className="pointer-events-none fixed right-11 bottom-8 flex h-[74px] items-center text-[66px] leading-none font-bold text-[#20a292]">
        <span className="text-[86px] font-medium">PP</span>
        助手
      </div>
    </div>
  );
};

export default App;
